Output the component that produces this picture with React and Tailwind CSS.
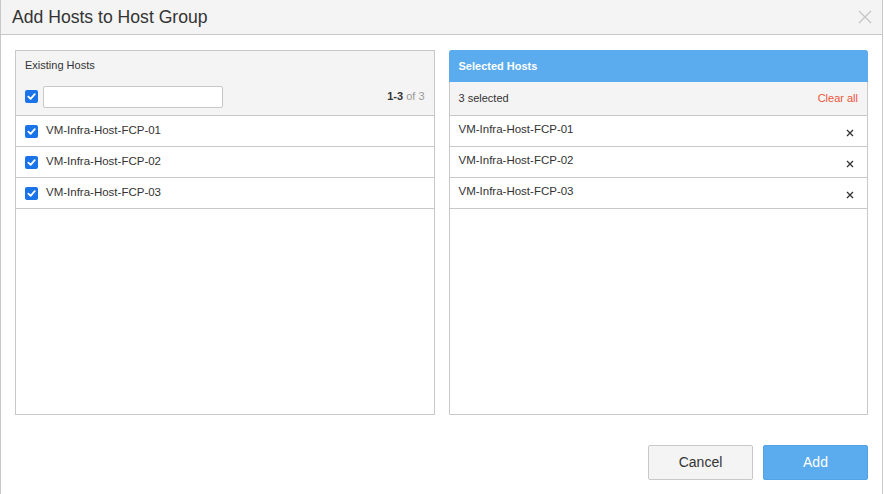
import React from "react";

const hosts = ["VM-Infra-Host-FCP-01", "VM-Infra-Host-FCP-02", "VM-Infra-Host-FCP-03"];

function Check() {
  return (
    <span className="flex h-[13px] w-[13px] items-center justify-center rounded-[2px] bg-[#1a73e8]">
      <svg width="9" height="9" viewBox="0 0 10 10">
        <path d="M1.5 5.2 L4 7.6 L8.6 2.4" stroke="white" strokeWidth="2" fill="none" strokeLinecap="round" strokeLinejoin="round" />
      </svg>
    </span>
  );
}

export default function App() {
  return (
    <div className="h-[494px] w-[884px] bg-white text-[#333]" style={{ fontFamily: '"Liberation Sans", Arial, sans-serif' }}>
      <div className="flex h-[494px] w-[883px] flex-col border-x border-[#c8c8c8]">
        <div className="flex h-[35px] shrink-0 items-center justify-between border-b border-[#c8c8c8] bg-[#f4f4f4] pl-[11px] pr-[10px]">
          <span className="text-[17.6px] text-[#333]">Add Hosts to Host Group</span>
          <svg width="14" height="14" viewBox="0 0 14 14">
            <path d="M1 1 L13 13 M13 1 L1 13" stroke="#c4c4c4" strokeWidth="1.3" />
          </svg>
        </div>
        <div className="flex gap-[14px] px-[14px] pt-[15px]">
          <div className="flex h-[365px] w-[420px] flex-col border border-[#c8c8c8]">
            <div className="h-[65px] shrink-0 border-b border-[#c8c8c8] bg-[#f4f4f4] px-[9px]">
              <div className="pt-[6px] text-[11px] text-[#333]">Existing Hosts</div>
              <div className="mt-[12px] flex items-center justify-between">
                <div className="flex items-center gap-[5px]">
                  <Check />
                  <div className="h-[22px] w-[180px] rounded-[2px] border border-[#c8c8c8] bg-white" />
                </div>
                <span className="text-[11px] text-[#999]">
                  <span className="font-bold text-[#333]">1-3</span> of 3
                </span>
              </div>
            </div>
            {hosts.map((h) => (
              <div key={h} className="flex h-[31px] shrink-0 items-center gap-[8px] border-b border-[#c8c8c8] pl-[9px] text-[11.5px] text-[#333]">
                <Check />
                <span>{h}</span>
              </div>
            ))}
          </div>
          <div className="flex h-[365px] w-[420px] flex-col rounded-t-[3px] border border-[#c8c8c8]">
            <div className="-mx-px -mt-px flex h-[32px] shrink-0 items-center rounded-t-[3px] bg-[#5aacee] px-[10px] text-[11px] font-bold text-white">
              Selected Hosts
            </div>
            <div className="flex h-[34px] shrink-0 items-center justify-between border-b border-[#c8c8c8] bg-[#f4f4f4] px-[9px] text-[11px]">
              <span className="text-[#333]">3 selected</span>
              <span className="text-[#f0553a]">Clear all</span>
            </div>
            {hosts.map((h) => (
              <div key={h} className="flex h-[31px] shrink-0 items-center justify-between border-b border-[#c8c8c8] pl-[9px] pr-[13px] text-[11.5px] text-[#333]">
                <span className="-mt-[2px]">{h}</span>
                <svg width="8" height="8" viewBox="0 0 8 8" className="mt-[3px]">
                  <path d="M1 1 L7 7 M7 1 L1 7" stroke="#333" strokeWidth="1.3" />
                </svg>
              </div>
            ))}
          </div>
        </div>
        <div className="flex justify-end gap-[10px] pr-[14px] pt-[30px]">
          <button className="h-[35px] w-[105px] rounded-[2px] border border-[#c8c8c8] bg-[#f4f4f4] text-[14px] text-[#333]">Cancel</button>
          <button className="h-[35px] w-[105px] rounded-[2px] border border-[#52a3e6] bg-[#5aacee] text-[14px] text-white">Add</button>
        </div>
      </div>
    </div>
  );
}
